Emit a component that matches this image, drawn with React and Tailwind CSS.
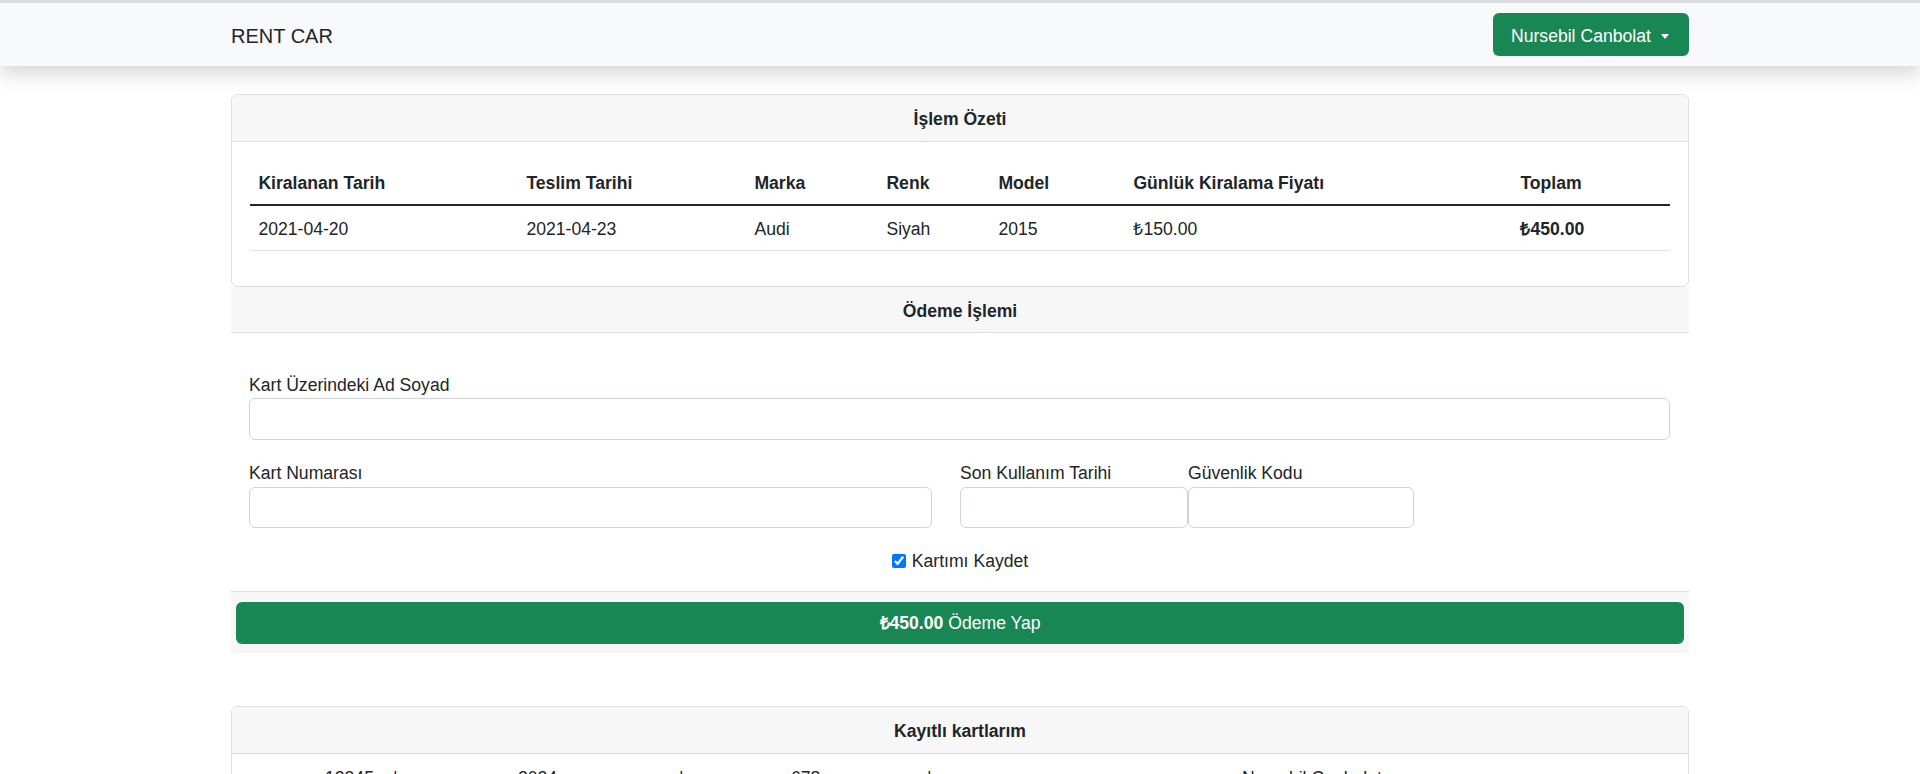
import React from 'react';

const cols = ['w-[268px]', 'w-[228px]', 'w-[132px]', 'w-[112px]', 'w-[135px]', 'w-[387px]', 'w-[158px]'];

const heads = ['Kiralanan Tarih', 'Teslim Tarihi', 'Marka', 'Renk', 'Model', 'Günlük Kiralama Fiyatı', 'Toplam'];
const row = ['2021-04-20', '2021-04-23', 'Audi', 'Siyah', '2015', '₺150.00', '₺450.00'];

function Navbar() {
  return (
    <nav className="h-[63px] bg-[#f8f9fa] shadow-[0_9px_18px_rgba(0,0,0,0.15)] relative z-10">
      <div className="w-[1458px] mx-auto h-full flex items-center justify-between">
        <span className="text-[20px] text-[#212529] pt-[4px]">RENT CAR</span>
        <button className="h-[43px] w-[196px] bg-[#198754] text-white rounded-[6px] flex items-center pl-[18px] pt-[3px] gap-[10px]">
          <span>Nursebil Canbolat</span>
          <span className="w-0 h-0 border-l-[4.5px] border-r-[4.5px] border-t-[5.5px] border-l-transparent border-r-transparent border-t-white" />
        </button>
      </div>
    </nav>
  );
}

function Summary() {
  return (
    <div className="border border-[#dfdfdf] rounded-[6px]">
      <div className="h-[47px] pt-[3px] bg-[#f7f7f7] border-b border-[#dfdfdf] flex items-center justify-center font-bold rounded-t-[6px]">
        İşlem Özeti
      </div>
      <div className="px-[17.6px] pt-[17.6px] pb-[35.2px]">
        <div className="flex border-b-2 border-[#212529]">
          {heads.map((h, i) => (
            <div key={h} className={`${cols[i]} px-[8.8px] pt-[10.6px] pb-[7px] font-bold`}>{h}</div>
          ))}
        </div>
        <div className="flex border-b border-[#dee2e6]">
          {row.map((c, i) => (
            <div key={i} className={`${cols[i]} px-[8.8px] pt-[10.6px] pb-[7px] ${i === 6 ? 'font-bold' : ''}`}>{c}</div>
          ))}
        </div>
      </div>
    </div>
  );
}

function Field({ label, className, h }) {
  return (
    <div className={className}>
      <label className="block">{label}</label>
      <input className={`block w-full ${h} border border-[#ced4da] rounded-[6px] bg-white`} />
    </div>
  );
}

function Payment() {
  return (
    <div>
      <div className="h-[46px] pt-[3px] bg-[#f7f7f7] border-b border-[#dfdfdf] flex items-center justify-center font-bold">
        Ödeme İşlemi
      </div>
      <div className="px-[18px] pt-[39px]">
        <Field label="Kart Üzerindeki Ad Soyad" className="w-[1421px]" h="h-[42px]" />
        <div className="flex mt-[20px]">
          <Field label="Kart Numarası" className="w-[683px]" h="h-[41px]" />
          <Field label="Son Kullanım Tarihi" className="w-[228px] ml-[28px]" h="h-[41px]" />
          <Field label="Güvenlik Kodu" className="w-[226px]" h="h-[41px]" />
        </div>
        <div className="flex items-center justify-center gap-[6px] mt-[20px]">
          <input type="checkbox" defaultChecked className="w-[14px] h-[14px] m-0" />
          <span>Kartımı Kaydet</span>
        </div>
      </div>
      <div className="mt-[16.6px] border-t border-[#dfdfdf] bg-[#f7f7f7] px-[5px] pt-[10px] pb-[9px]">
        <button className="w-full h-[42px] pt-[2px] bg-[#198754] text-white rounded-[6px] flex items-center justify-center">
          <span className="font-bold">₺450.00</span>&nbsp;Ödeme Yap
        </button>
      </div>
    </div>
  );
}

function SavedCards() {
  return (
    <div className="mt-[53px] border border-[#dfdfdf] rounded-[6px]">
      <div className="h-[47px] pt-[3px] bg-[#f7f7f7] border-b border-[#dfdfdf] flex items-center justify-center font-bold rounded-t-[6px]">
        Kayıtlı kartlarım
      </div>
      <div className="flex pl-[93px] pt-[11px] pb-[8px]">
        <div className="w-[68px]">12345</div>
        <div className="w-[125px]">|</div>
        <div className="w-[161px]">2024</div>
        <div className="w-[112px]">|</div>
        <div className="w-[136px]">678</div>
        <div className="w-[315px]">|</div>
        <div>Nursebil Canbolat</div>
      </div>
    </div>
  );
}

export default function App() {
  return (
    <div className="h-[774px] overflow-hidden bg-white border-t-[3px] border-[#dcdde0] font-['Liberation_Sans',Arial,sans-serif] text-[17.6px] leading-[26.4px] text-[#212529]">
      <Navbar />
      <main className="w-[1458px] mx-auto mt-[28px]">
        <Summary />
        <Payment />
        <SavedCards />
      </main>
    </div>
  );
}
